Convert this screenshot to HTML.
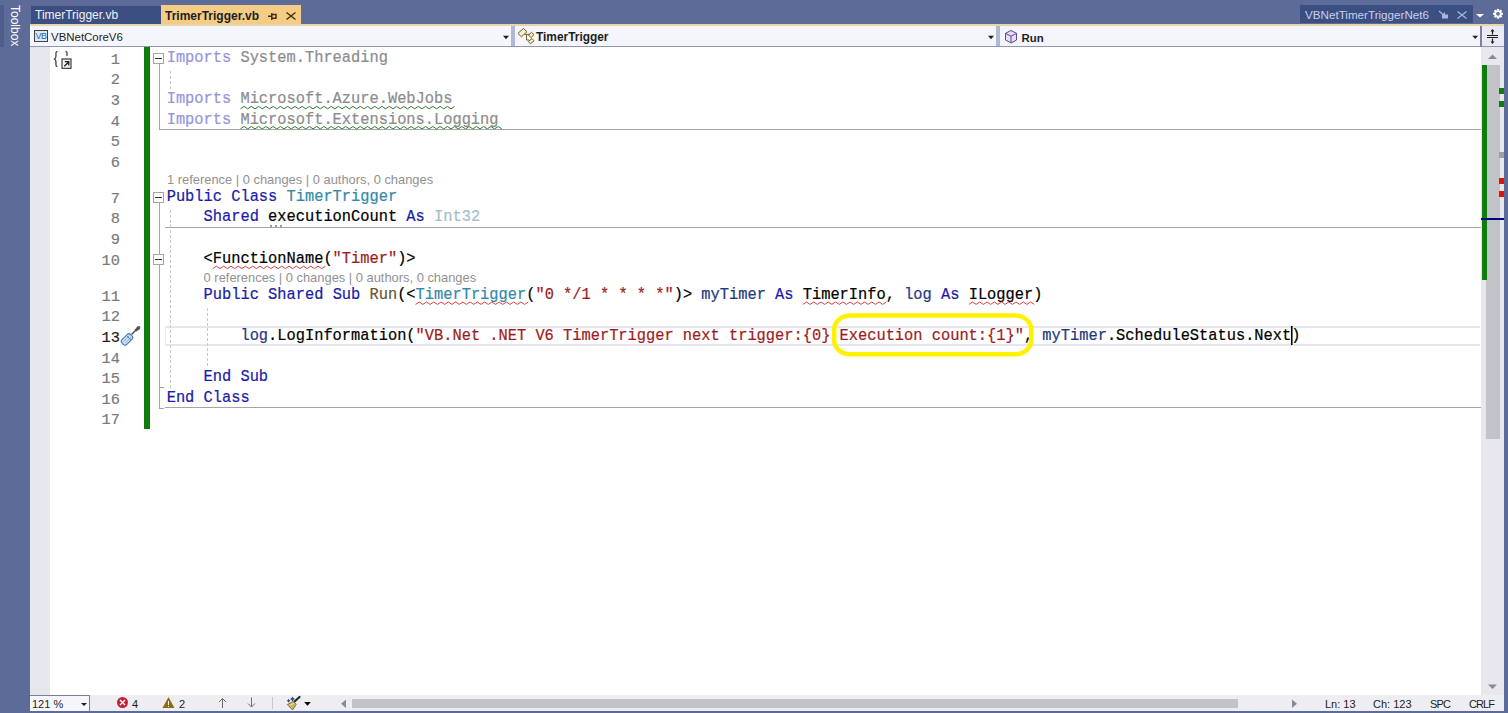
<!DOCTYPE html>
<html><head><meta charset="utf-8">
<style>
*{margin:0;padding:0;box-sizing:border-box}
html,body{width:1508px;height:713px;overflow:hidden;background:#5d6b99;font-family:"Liberation Sans",sans-serif;position:relative}
.a{position:absolute}
.ui{font-family:"Liberation Sans",sans-serif;font-size:12px;white-space:pre;line-height:14px}
.code{font-family:"Liberation Mono",monospace;font-size:15.37px;white-space:pre;line-height:20px;-webkit-text-stroke:0.2px currentColor}
.cx{transform:scaleY(1.06);transform-origin:0 14px}
.k{color:#1a1aa8}
.kf{color:#9595dc}
.g{color:#8c8c8c}
.t{color:#3389a6}
.tf{color:#a2bec8}
.s{color:#9c1c1c}
.p{color:#1f377f}
.m{color:#6b5530}
.b{color:#000}
.cl{font-family:"Liberation Sans",sans-serif;font-size:12.9px;color:#919191;white-space:pre;line-height:15px}
svg{position:absolute;overflow:visible}
</style></head>
<body>
<!-- toolbox strip -->
<div class="a" style="left:0;top:5px;width:4px;height:42px;background:#4f5c8c"></div>
<div class="a ui" style="left:8px;top:5px;width:14px;height:42px;color:#fff;writing-mode:vertical-rl;">Toolbox</div>

<!-- tabs -->
<div class="a" style="left:31px;top:6px;width:130px;height:18px;background:#3c4f83"></div>
<div class="a ui" style="left:35px;top:8px;color:#f0f0f0">TimerTrigger.vb</div>
<div class="a" style="left:161px;top:5px;width:140px;height:19px;background:#f5cc84"></div>
<div class="a ui" style="left:165px;top:9px;color:#1e1e1e;font-weight:bold">TrimerTrigger.vb</div>
<svg style="left:0;top:0" width="1508" height="30">
 <g stroke="#3d300c" stroke-width="1.4" fill="none">
  <path d="M268 16.3H271.5M271.8 13V20M272 14.5H276V18.3H272"/>
  <path d="M286.5 12.5L295.5 19.5M295.5 12.5L286.5 19.5"/>
 </g>
</svg>

<div class="a" style="left:1300px;top:5px;width:173px;height:18px;background:#3c4f83"></div>
<div class="a ui" style="left:1305px;top:8px;color:#c8d0f0;font-size:11.65px">VBNetTimerTriggerNet6</div>
<svg style="left:0;top:0" width="1508" height="30">
 <g stroke="#a8b4d8" stroke-width="1.3" fill="none">
  <path d="M1439 11L1444 15.5"/>
  <path d="M1457.5 11.5L1466.5 18.5M1466.5 11.5L1457.5 18.5"/>
 </g>
 <path d="M1442 18.5V14.5L1444 13V12.5H1445V14.5H1448V18.5Z" fill="#a8b4d8"/>
 <path d="M1476 14H1484L1480 17.5Z" fill="#fff"/>
 <g transform="translate(1498 13.8)" fill="#fff">
  <circle r="3.6"/>
  <g><rect x="-1.1" y="-4.9" width="2.2" height="9.8"/><rect x="-4.9" y="-1.1" width="9.8" height="2.2"/>
  <rect x="-1.1" y="-4.9" width="2.2" height="9.8" transform="rotate(45)"/><rect x="-1.1" y="-4.9" width="2.2" height="9.8" transform="rotate(-45)"/></g>
  <circle r="1.9" fill="#5d6b99"/>
 </g>
</svg>

<!-- orange line -->
<div class="a" style="left:30px;top:24px;width:1474px;height:2px;background:#e9d5a8"></div>
<!-- nav bar -->
<div class="a" style="left:30px;top:26px;width:1474px;height:21px;background:#f5f6fb;border-bottom:1px solid #9096b0"></div>
<div class="a" style="left:511px;top:26px;width:4px;height:20px;background:#b0b8d8"></div>
<div class="a" style="left:996px;top:26px;width:4px;height:20px;background:#b0b8d8"></div>
<div class="a" style="left:1480px;top:26px;width:1.5px;height:21px;background:#7d839e"></div>
<div class="a" style="left:1482px;top:26px;width:22px;height:20px;background:#e8eaf4"></div>
<!-- VB icon -->
<div class="a" style="left:34px;top:30px;width:14px;height:12px;border:1px solid #424242;background:#d9e9f8"></div>
<div class="a" style="left:35px;top:31px;width:12px;height:10px;font:9px 'Liberation Sans',sans-serif;color:#2f64a8;line-height:10px;text-align:center;letter-spacing:-0.6px">VB</div>
<div class="a ui" style="left:51px;top:29.5px;color:#1e1e1e;font-size:11.45px">VBNetCoreV6</div>
<div class="a ui" style="left:536px;top:30px;color:#1e1e1e;font-weight:bold;font-size:11.9px">TimerTrigger</div>
<div class="a ui" style="left:1021.5px;top:30.5px;color:#1e1e1e;font-weight:bold;font-size:11.4px">Run</div>
<svg style="left:0;top:0" width="1508" height="50">
 <path d="M503 35.8H509L506 39.2Z" fill="#1e1e1e"/>
 <path d="M988 35.8H994L991 39.2Z" fill="#1e1e1e"/>
 <path d="M1472.3 35.8H1478.1L1475.2 39Z" fill="#1e1e1e"/>
 <!-- class icon -->
 <g stroke="#6f5f25" stroke-width="1" fill="#f8efcc">
  <path d="M523.4 28.5L527 31.8L521.4 36.8L517.9 33.4Z"/>
  <path d="M531.5 32.3L534 34.7L531 37.5L528.5 35.2Z"/>
  <path d="M532 38.5L534 40.8L530.5 43.8L528.3 41.5Z"/>
  <path d="M524.5 34.4H530M526.5 34.4V40H529" fill="none"/>
 </g>
 <!-- cube icon -->
 <g stroke="#5c4a8a" stroke-width="1" fill="#e6dcf6">
  <path d="M1011 30.5L1016.5 33.3V40L1011 43L1005.5 40V33.3Z"/>
  <path d="M1005.5 33.3L1011 36.2L1016.5 33.3M1011 36.2V43" fill="none"/>
 </g>
 <!-- splitter icon -->
 <g stroke="#1e1e1e" stroke-width="1.2" fill="none">
  <path d="M1487 35.5H1498M1487 37.5H1498M1492.5 30V34.5M1492.5 38.5V43"/>
 </g>
 <path d="M1490.5 31.5H1494.5L1492.5 29Z M1490.5 41.5H1494.5L1492.5 44Z" fill="#1e1e1e"/>
</svg>

<!-- editor area -->
<div class="a" style="left:30px;top:47px;width:1451px;height:648px;background:#fff"></div>
<div class="a" style="left:30px;top:47px;width:20px;height:648px;background:#e6e7ed"></div>
<!-- green change bar -->
<div class="a" style="left:144px;top:47px;width:6px;height:382px;background:#107c10"></div>

<div class="a" style="left:165px;top:326px;width:1315px;height:20px;border:2px solid #e6e6ee;border-left:1px solid #ececf2;border-right:none"></div>
<div class="a" style="left:159px;top:129px;width:1322px;height:1px;background:#a5a5a5"></div>
<div class="a" style="left:165px;top:227px;width:1316px;height:1px;background:#a5a5a5"></div>
<div class="a" style="left:165px;top:407px;width:1316px;height:1px;background:#a5a5a5"></div>
<div class="a" style="left:159px;top:63px;width:1px;height:66px;background:#a5a5a5"></div>
<div class="a" style="left:159px;top:203px;width:1px;height:206px;background:#a5a5a5"></div>
<div class="a" style="left:159px;top:387px;width:5px;height:1px;background:#a5a5a5"></div>
<div class="a" style="left:159px;top:408px;width:5px;height:1px;background:#a5a5a5"></div>
<div class="a" style="left:153px;top:53px;width:11px;height:11px;border:1px solid #a5a5a5;background:#fff"></div>
<div class="a" style="left:155px;top:58px;width:7px;height:1.4px;background:#333"></div>
<div class="a" style="left:153px;top:192px;width:11px;height:11px;border:1px solid #a5a5a5;background:#fff"></div>
<div class="a" style="left:155px;top:197px;width:7px;height:1.4px;background:#333"></div>
<div class="a" style="left:153px;top:254px;width:11px;height:11px;border:1px solid #a5a5a5;background:#fff"></div>
<div class="a" style="left:155px;top:259px;width:7px;height:1.4px;background:#333"></div>
<div class="a" style="left:170px;top:71px;width:1px;height:18px;background:repeating-linear-gradient(#c8c8c8 0 3px,transparent 3px 5px)"></div>
<div class="a" style="left:170px;top:210px;width:1px;height:178px;background:repeating-linear-gradient(#c8c8c8 0 3px,transparent 3px 5px)"></div>
<div class="a" style="left:207px;top:308px;width:1px;height:58px;background:repeating-linear-gradient(#c8c8c8 0 3px,transparent 3px 5px)"></div>
<div class="a cl" style="left:167px;top:172px">1 reference | 0 changes | 0 authors, 0 changes</div>
<div class="a cl" style="left:203.6px;top:270px">0 references | 0 changes | 0 authors, 0 changes</div>
<div class="a code cx" style="left:166.70px;top:48.30px"><span class="kf">Imports</span><span class="g"> System.Threading</span></div>
<div class="a code" style="left:101.56px;top:50.30px;color:#7a7a7a"> 1</div>
<div class="a code" style="left:101.56px;top:70.40px;color:#7a7a7a"> 2</div>
<div class="a code cx" style="left:166.70px;top:89.40px"><span class="kf">Imports</span><span class="g"> Microsoft.Azure.WebJobs</span></div>
<div class="a code" style="left:101.56px;top:91.40px;color:#7a7a7a"> 3</div>
<div class="a code cx" style="left:166.70px;top:109.50px"><span class="kf">Imports</span><span class="g"> Microsoft.Extensions.Logging</span></div>
<div class="a code" style="left:101.56px;top:111.50px;color:#7a7a7a"> 4</div>
<div class="a code" style="left:101.56px;top:132.10px;color:#7a7a7a"> 5</div>
<div class="a code" style="left:101.56px;top:153.10px;color:#7a7a7a"> 6</div>
<div class="a code cx" style="left:166.70px;top:186.80px"><span class="k">Public</span><span class="b"> </span><span class="k">Class</span><span class="b"> </span><span class="t">TimerTrigger</span></div>
<div class="a code" style="left:101.56px;top:188.80px;color:#7a7a7a"> 7</div>
<div class="a code cx" style="left:166.70px;top:207.10px"><span class="b">    </span><span class="k">Shared</span><span class="b"> executionCount </span><span class="k">As</span><span class="b"> </span><span class="tf">Int32</span></div>
<div class="a code" style="left:101.56px;top:209.10px;color:#7a7a7a"> 8</div>
<div class="a code" style="left:101.56px;top:229.90px;color:#7a7a7a"> 9</div>
<div class="a code cx" style="left:166.70px;top:249.20px"><span class="b">    &lt;FunctionName(</span><span class="s">&quot;Timer&quot;</span><span class="b">)&gt;</span></div>
<div class="a code" style="left:101.56px;top:251.20px;color:#7a7a7a">10</div>
<div class="a code cx" style="left:166.70px;top:285.00px"><span class="b">    </span><span class="k">Public</span><span class="b"> </span><span class="k">Shared</span><span class="b"> </span><span class="k">Sub</span><span class="b"> </span><span class="m">Run</span><span class="b">(&lt;</span><span class="t">TimerTrigger</span><span class="b">(</span><span class="s">&quot;0 */1 * * * *&quot;</span><span class="b">)&gt; </span><span class="p">myTimer</span><span class="b"> </span><span class="k">As</span><span class="b"> TimerInfo, </span><span class="p">log</span><span class="b"> </span><span class="k">As</span><span class="b"> ILogger)</span></div>
<div class="a code" style="left:101.56px;top:287.00px;color:#7a7a7a">11</div>
<div class="a code" style="left:101.56px;top:307.30px;color:#7a7a7a">12</div>
<div class="a code cx" style="left:166.70px;top:326.20px"><span class="b">        </span><span class="p">log</span><span class="b">.LogInformation(</span><span class="s">&quot;VB.Net .NET V6 TimerTrigger next trigger:{0} Execution count:{1}&quot;</span><span class="b">, </span><span class="p">myTimer</span><span class="b">.ScheduleStatus.Next)</span></div>
<div class="a code" style="left:101.56px;top:328.20px;color:#1e1e1e">13</div>
<div class="a code" style="left:101.56px;top:349.10px;color:#7a7a7a">14</div>
<div class="a code cx" style="left:166.70px;top:367.20px"><span class="b">    </span><span class="k">End</span><span class="b"> </span><span class="k">Sub</span></div>
<div class="a code" style="left:101.56px;top:369.20px;color:#7a7a7a">15</div>
<div class="a code cx" style="left:166.70px;top:388.20px"><span class="k">End</span><span class="b"> </span><span class="k">Class</span></div>
<div class="a code" style="left:101.56px;top:390.20px;color:#7a7a7a">16</div>
<div class="a code" style="left:101.56px;top:410.30px;color:#7a7a7a">17</div>
<svg style="left:0;top:0" width="1508" height="713">
<path d="M240.46 108.80 L244.09 106.40 L247.72 108.80 L251.35 106.40 L254.98 108.80 L258.61 106.40 L262.24 108.80 L265.87 106.40 L269.50 108.80 L273.13 106.40 L276.76 108.80 L280.39 106.40 L284.02 108.80 L287.65 106.40 L291.28 108.80 L294.91 106.40 L298.54 108.80 L302.17 106.40 L305.80 108.80 L309.43 106.40 L313.06 108.80 L316.69 106.40 L320.32 108.80 L323.95 106.40 L327.58 108.80 L331.21 106.40 L334.84 108.80 L338.47 106.40 L342.10 108.80 L345.73 106.40 L349.36 108.80 L352.99 106.40 L356.62 108.80 L360.25 106.40 L363.88 108.80 L367.51 106.40 L371.14 108.80 L374.77 106.40 L378.40 108.80 L382.03 106.40 L385.66 108.80 L389.29 106.40 L392.92 108.80 L396.55 106.40 L400.18 108.80 L403.81 106.40 L407.44 108.80 L411.07 106.40 L414.70 108.80 L418.33 106.40 L421.96 108.80 L425.59 106.40 L429.22 108.80 L432.85 106.40 L436.48 108.80 L440.11 106.40 L443.74 108.80 L447.37 106.40 L451.00 108.80 L454.63 106.40" stroke="#2f7a2f" stroke-width="1" fill="none"/>
<path d="M240.46 128.90 L244.09 126.50 L247.72 128.90 L251.35 126.50 L254.98 128.90 L258.61 126.50 L262.24 128.90 L265.87 126.50 L269.50 128.90 L273.13 126.50 L276.76 128.90 L280.39 126.50 L284.02 128.90 L287.65 126.50 L291.28 128.90 L294.91 126.50 L298.54 128.90 L302.17 126.50 L305.80 128.90 L309.43 126.50 L313.06 128.90 L316.69 126.50 L320.32 128.90 L323.95 126.50 L327.58 128.90 L331.21 126.50 L334.84 128.90 L338.47 126.50 L342.10 128.90 L345.73 126.50 L349.36 128.90 L352.99 126.50 L356.62 128.90 L360.25 126.50 L363.88 128.90 L367.51 126.50 L371.14 128.90 L374.77 126.50 L378.40 128.90 L382.03 126.50 L385.66 128.90 L389.29 126.50 L392.92 128.90 L396.55 126.50 L400.18 128.90 L403.81 126.50 L407.44 128.90 L411.07 126.50 L414.70 128.90 L418.33 126.50 L421.96 128.90 L425.59 126.50 L429.22 128.90 L432.85 126.50 L436.48 128.90 L440.11 126.50 L443.74 128.90 L447.37 126.50 L451.00 128.90 L454.63 126.50 L458.26 128.90 L461.89 126.50 L465.52 128.90 L469.15 126.50 L472.78 128.90 L476.41 126.50 L480.04 128.90 L483.67 126.50 L487.30 128.90 L490.93 126.50 L494.56 128.90 L498.19 126.50 L501.82 128.90" stroke="#2f7a2f" stroke-width="1" fill="none"/>
<path d="M212.80 268.60 L216.43 266.20 L220.06 268.60 L223.69 266.20 L227.32 268.60 L230.95 266.20 L234.58 268.60 L238.21 266.20 L241.84 268.60 L245.47 266.20 L249.10 268.60 L252.73 266.20 L256.36 268.60 L259.99 266.20 L263.62 268.60 L267.25 266.20 L270.88 268.60 L274.51 266.20 L278.14 268.60 L281.77 266.20 L285.40 268.60 L289.03 266.20 L292.66 268.60 L296.29 266.20 L299.92 268.60 L303.55 266.20 L307.18 268.60 L310.81 266.20 L314.44 268.60 L318.07 266.20 L321.70 268.60 L325.33 266.20" stroke="#d84040" stroke-width="1" fill="none"/>
<path d="M415.64 304.40 L419.27 302.00 L422.90 304.40 L426.53 302.00 L430.16 304.40 L433.79 302.00 L437.42 304.40 L441.05 302.00 L444.68 304.40 L448.31 302.00 L451.94 304.40 L455.57 302.00 L459.20 304.40 L462.83 302.00 L466.46 304.40 L470.09 302.00 L473.72 304.40 L477.35 302.00 L480.98 304.40 L484.61 302.00 L488.24 304.40 L491.87 302.00 L495.50 304.40 L499.13 302.00 L502.76 304.40 L506.39 302.00 L510.02 304.40 L513.65 302.00 L517.28 304.40 L520.91 302.00 L524.54 304.40 L528.17 302.00" stroke="#d84040" stroke-width="1" fill="none"/>
<path d="M802.88 304.40 L806.51 302.00 L810.14 304.40 L813.77 302.00 L817.40 304.40 L821.03 302.00 L824.66 304.40 L828.29 302.00 L831.92 304.40 L835.55 302.00 L839.18 304.40 L842.81 302.00 L846.44 304.40 L850.07 302.00 L853.70 304.40 L857.33 302.00 L860.96 304.40 L864.59 302.00 L868.22 304.40 L871.85 302.00 L875.48 304.40 L879.11 302.00 L882.74 304.40 L886.37 302.00" stroke="#d84040" stroke-width="1" fill="none"/>
<path d="M968.84 304.40 L972.47 302.00 L976.10 304.40 L979.73 302.00 L983.36 304.40 L986.99 302.00 L990.62 304.40 L994.25 302.00 L997.88 304.40 L1001.51 302.00 L1005.14 304.40 L1008.77 302.00 L1012.40 304.40 L1016.03 302.00 L1019.66 304.40 L1023.29 302.00 L1026.92 304.40 L1030.55 302.00 L1034.18 304.40" stroke="#d84040" stroke-width="1" fill="none"/>
<rect x="270" y="225" width="2" height="2" fill="#9a9a9a"/>
<rect x="275" y="225" width="2" height="2" fill="#9a9a9a"/>
<rect x="280" y="225" width="2" height="2" fill="#9a9a9a"/>
<rect x="1290.94" y="326" width="1.6" height="19" fill="#000"/>
<path d="M57.5 51.5C55.5 51.5 56 53 56 56C56 58 55.5 58.5 54.5 59C55.5 59.5 56 60 56 62C56 65 55.5 66.5 57.5 66.5" stroke="#333" stroke-width="1.2" fill="none"/>
<path d="M65.5 51.5C67.5 51.5 67 53 67 56" stroke="#333" stroke-width="1.2" fill="none"/>
<rect x="62" y="59" width="9" height="9.3" stroke="#2a2a2a" stroke-width="1.1" fill="#f4f4f4"/>
<path d="M64.3 66.3L68.6 62M64.8 61.6H68.8V65.4" stroke="#1e1e1e" stroke-width="1.3" fill="none"/>
<path d="M131.5 334.5L136 330" stroke="#4a4a4a" stroke-width="1.5"/>
<path d="M134.5 330L137.5 326.3L140.3 326.2L140 329L136 331.8Z" fill="#555"/>
<g transform="translate(127 339.5) rotate(-45)"><rect x="-6" y="-3.4" width="12" height="6.8" rx="2.4" fill="#cfe3f7" stroke="#4a78b0" stroke-width="1.1"/><path d="M-4 -1H4.5M-4 1.3H4.5" stroke="#6d93c4" stroke-width="0.7"/><path d="M2.5 -3V3" stroke="#4a78b0" stroke-width="0.9"/></g>
<rect x="834.2" y="315.5" width="197" height="38.8" rx="16" ry="14" stroke="#fff200" stroke-width="4.5" fill="none"/>
</svg>

<!-- vscroll -->
<div class="a" style="left:1481px;top:47px;width:23px;height:648px;background:#e8e8ec"></div>
<div class="a" style="left:1486px;top:65px;width:14px;height:374px;background:#c2c3c9"></div>
<div class="a" style="left:1482px;top:65px;width:5px;height:215px;background:#107c10"></div>
<div class="a" style="left:1499px;top:88px;width:5px;height:6px;background:#107c10"></div>
<div class="a" style="left:1499px;top:101px;width:5px;height:6px;background:#107c10"></div>
<div class="a" style="left:1499px;top:152px;width:5px;height:6px;background:#a0a0a0"></div>
<div class="a" style="left:1499px;top:178px;width:5px;height:6px;background:#e51400"></div>
<div class="a" style="left:1499px;top:191px;width:5px;height:6px;background:#e51400"></div>
<div class="a" style="left:1481px;top:218px;width:23px;height:2px;background:#00008b"></div>
<svg style="left:0;top:0" width="1508" height="713">
 <path d="M1488 59H1497L1492.5 54.5Z" fill="#868999"/>
 <path d="M1488 684.5H1497L1492.5 689Z" fill="#868999"/>
</svg>

<!-- status bar -->
<div class="a" style="left:30px;top:695px;width:1474px;height:16px;background:#eeeef2"></div>
<div class="a" style="left:30px;top:695px;width:60px;height:16px;background:#f5f6fb;border:1px solid #7b7f95;border-left:none;border-bottom:none"></div>
<div class="a ui" style="left:32px;top:697px;color:#1e1e1e;font-size:11px">121 %</div>
<div class="a ui" style="left:132px;top:697px;color:#1e1e1e;font-size:11px">4</div>
<div class="a ui" style="left:179px;top:697px;color:#1e1e1e;font-size:11px">2</div>
<div class="a ui" style="left:1325px;top:697px;color:#1e1e1e;font-size:11px">Ln: 13</div>
<div class="a ui" style="left:1373px;top:697px;color:#1e1e1e;font-size:11px">Ch: 123</div>
<div class="a ui" style="left:1430px;top:697px;color:#1e1e1e;font-size:11px;letter-spacing:-0.8px">SPC</div>
<div class="a ui" style="left:1469px;top:697px;color:#1e1e1e;font-size:11px;letter-spacing:-0.9px">CRLF</div>
<div class="a" style="left:352px;top:699px;width:886px;height:9px;background:#c2c3c9"></div>
<svg style="left:0;top:0" width="1508" height="713">
 <path d="M81 703H87L84 706Z" fill="#1e1e1e"/>
 <circle cx="122.5" cy="702.5" r="5.5" fill="#c5203a"/>
 <path d="M120 700L125 705M125 700L120 705" stroke="#fff" stroke-width="1.3"/>
 <path d="M168.5 697L174.5 708H162.5Z" fill="#8a6c14"/>
 <path d="M168.5 701V705M168.5 706V707" stroke="#fff" stroke-width="1"/>
 <path d="M222.5 708V698.5M219 702L222.5 698.5L226 702" stroke="#6e6e6e" stroke-width="1" fill="none"/>
 <path d="M251.5 697.5V707M248 703.5L251.5 707L255 703.5" stroke="#6e6e6e" stroke-width="1" fill="none"/>
 <path d="M272.5 697V709" stroke="#c8c8cc" stroke-width="1"/>
 <path d="M304.2 702H310.8L307.5 705.8Z" fill="#000"/>
 <path d="M294.3 701.8L299.5 697" stroke="#2a2a2a" stroke-width="2.2" stroke-linecap="round"/>
 <path d="M287.3 704.6L293.4 701.2L296.2 704.4L292.6 710Z" fill="#c9b660" stroke="#7d6a2a" stroke-width="0.9"/>
 <path d="M290 705L293.5 703.5" stroke="#f2e6a8" stroke-width="1"/>
 <path d="M292.5 696.5L293.4 698.1L295 699L293.4 699.9L292.5 701.5L291.6 699.9L290 699L291.6 698.1Z" fill="#2c4a80"/>
 <path d="M288.6 698.8L289.3 700L290.6 700.8L289.3 701.5L288.6 702.8L287.9 701.5L286.6 700.8L287.9 700Z" fill="#2c4a80"/>
 <path d="M346 699.5V708L341 703.75Z" fill="#868999"/>
 <path d="M1292 699.5V708L1297 703.75Z" fill="#868999"/>
</svg>
<div class="a" style="left:0;top:711px;width:1508px;height:2px;background:#5d6b99"></div>
</body></html>
